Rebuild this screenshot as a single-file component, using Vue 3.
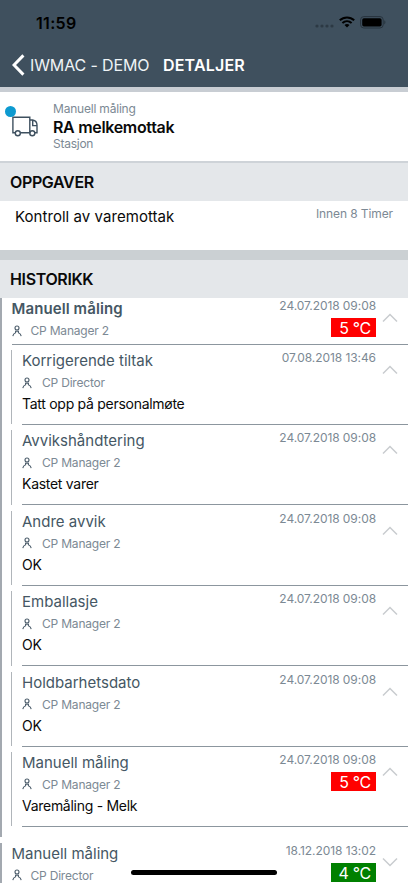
<script setup>
const children = [
  { title: 'Korrigerende tiltak', user: 'CP Director', date: '07.08.2018 13:46', note: 'Tatt opp på personalmøte' },
  { title: 'Avvikshåndtering', user: 'CP Manager 2', date: '24.07.2018 09:08', note: 'Kastet varer' },
  { title: 'Andre avvik', user: 'CP Manager 2', date: '24.07.2018 09:08', note: 'OK' },
  { title: 'Emballasje', user: 'CP Manager 2', date: '24.07.2018 09:08', note: 'OK' },
  { title: 'Holdbarhetsdato', user: 'CP Manager 2', date: '24.07.2018 09:08', note: 'OK' },
  { title: 'Manuell måling', user: 'CP Manager 2', date: '24.07.2018 09:08', note: 'Varemåling - Melk', value: '5 °C' },
]
const groups = [
  { title: 'Manuell måling', user: 'CP Manager 2', date: '24.07.2018 09:08', value: '5 °C', open: true, children },
  { title: 'Manuell måling', user: 'CP Director', date: '18.12.2018 13:02', value: '4 °C', ok: true, open: false, children: [] },
]
</script>

<template>
  <main class="screen">
    <header class="top">
      <div class="status">
        <span class="clock">11:59</span>
        <svg class="dots" width="20" height="4" viewBox="0 0 20 4"><circle v-for="n in 4" :key="n" :cx="n * 5 - 3" cy="2" r="1.6" /></svg>
        <svg class="wifi" width="16" height="12" viewBox="0 0 16 12" fill="none" stroke="#000" stroke-width="2">
          <path d="M.8 4.3C4.9.4 11.1.4 15.2 4.3M3.4 7.1c2.7-2.5 6.5-2.5 9.2 0" />
          <path d="M5.5 8.9c1.5-1.3 3.5-1.3 5 0L8 11.5z" fill="#000" stroke="none" />
        </svg>
        <svg class="battery" width="26" height="13" viewBox="0 0 26 13">
          <rect x=".6" y=".6" width="22.6" height="11.4" rx="3.2" fill="none" stroke="#27333d" />
          <rect x="2.2" y="2.2" width="19.4" height="8.2" rx="1.7" />
          <path d="M24.3 4.2c1.5.7 1.5 3.5 0 4.2z" fill="#27333d" />
        </svg>
      </div>
      <nav class="nav">
        <svg width="13" height="22" viewBox="0 0 13 22" fill="none" stroke="#fff" stroke-width="3"><path d="M11.4 1.4 2 11l9.4 9.6" /></svg>
        <span class="back">IWMAC - DEMO</span>
        <span class="current">DETALJER</span>
      </nav>
    </header>

    <section class="station">
      <div class="truck">
        <svg width="27" height="21" viewBox="0 0 27 21" fill="none" stroke="#3e505f" stroke-width="1.4">
          <path d="M3.3 16.800H.9V1.200h16.900v15.600H8.300M17.800 4h2.800c2.700.4 4.400 2.700 4.400 5.300v7.500h-2.300M20.700 4v5.600H25" />
          <circle cx="5.800" cy="17.200" r="2.500" /><circle cx="20.300" cy="17.200" r="2.500" />
        </svg>
        <i class="badge"></i>
      </div>
      <div class="station-text">
        <span class="kind">Manuell måling</span>
        <strong class="name">RA melkemottak</strong>
        <span class="type">Stasjon</span>
      </div>
    </section>

    <h2 class="heading">OPPGAVER</h2>
    <section class="task">
      <span class="task-name">Kontroll av varemottak</span>
      <span class="due">Innen 8 Timer</span>
    </section>

    <h2 class="heading">HISTORIKK</h2>
    <section v-for="(g, i) in groups" :key="i" class="group" :class="{ open: g.open }">
      <div class="group-head">
        <div class="left">
          <span class="title" :class="{ bold: g.open }">{{ g.title }}</span>
          <span class="user">
            <svg width="10" height="12" viewBox="0 0 10 12" fill="none" stroke="#4b5c6a" stroke-width="1.1"><circle cx="5" cy="3" r="2" /><path d="M.8 11.200C1.200 8.900 2 8.200 3.600 7.700V6.300h2.800v1.400C8 8.200 8.800 8.900 9.200 11.200" /></svg>
            <span>{{ g.user }}</span>
          </span>
        </div>
        <div class="right"><span class="date">{{ g.date }}</span><span class="value" :class="{ ok: g.ok }">{{ g.value }}</span></div>
        <svg class="chev" :class="{ down: !g.open }" width="16" height="10" viewBox="0 0 16 10" fill="none" stroke="#c9cccf" stroke-width="1.5"><path d="M1 8.5 8 1.5l7 7" /></svg>
      </div>
      <article v-for="c in g.children" :key="c.title" class="child">
        <div class="child-body">
          <div class="left">
            <span class="title">{{ c.title }}</span>
            <span class="user">
              <svg width="10" height="12" viewBox="0 0 10 12" fill="none" stroke="#4b5c6a" stroke-width="1.1"><circle cx="5" cy="3" r="2" /><path d="M.8 11.200C1.200 8.900 2 8.200 3.600 7.700V6.300h2.800v1.400C8 8.200 8.800 8.900 9.200 11.200" /></svg>
              <span>{{ c.user }}</span>
            </span>
            <span class="note">{{ c.note }}</span>
          </div>
          <div class="right"><span class="date">{{ c.date }}</span><span v-if="c.value" class="value">{{ c.value }}</span></div>
          <svg class="chev" width="16" height="10" viewBox="0 0 16 10" fill="none" stroke="#c9cccf" stroke-width="1.5"><path d="M1 8.5 8 1.5l7 7" /></svg>
        </div>
      </article>
    </section>
    <div class="home"></div>
  </main>
</template>

<style>
body { margin: 0; }
</style>

<style scoped>
.screen { position: relative; box-sizing: border-box; width: 408px; height: 883px; overflow: hidden; background: #fff; font-family: Inter, "Liberation Sans", sans-serif; color: #0a0a0a; white-space: nowrap; }
.screen * { box-sizing: border-box; }
svg { display: block; flex: none; }
.top { height: 92px; background: #3f505e; border-bottom: 5px solid #c8cdd3; }
.status { display: flex; height: 45px; padding-left: 36px; }
.clock { width: 279px; padding-top: 13px; font-size: 16px; letter-spacing: .3px; line-height: 20px; font-weight: 600; color: #000; }
.dots { margin-top: 24px; fill: #2c3944; }
.wifi { margin: 16px 0 0 4px; }
.battery { margin: 16px 0 0 5px; }
.nav { display: flex; align-items: center; height: 40px; padding-left: 12px; color: #fff; }
.back { width: 133px; margin-left: 5px; font-size: 16px; letter-spacing: -.13px; color: #eef3f6; }
.current { font-size: 16px; letter-spacing: .17px; font-weight: 600; }
.station { display: flex; height: 71px; border-bottom: 2px solid #ced3d8; }
.truck { position: relative; width: 53px; padding: 24px 0 0 12px; }
.badge { position: absolute; left: 5px; top: 14px; width: 11px; height: 11px; border-radius: 50%; background: #0d9ad0; }
.station-text { display: flex; flex-direction: column; padding-top: 9px; }
.kind { font-size: 12px; letter-spacing: -.2px; line-height: 16px; color: #7c8994; }
.name { font-size: 16px; letter-spacing: -.32px; line-height: 20px; font-weight: 600; }
.type { font-size: 12px; letter-spacing: -.25px; line-height: 14px; color: #7c8994; }
.heading { margin: 0; height: 38px; padding-left: 10px; font-size: 16px; letter-spacing: -.36px; line-height: 39px; font-weight: 600; background: #e4e7ea; }
.task { display: flex; justify-content: space-between; height: 59px; padding: 5px 15px 0 15px; border-bottom: 10px solid #cbd0d3; }
.task-name { font-size: 15px; letter-spacing: .05px; line-height: 21px; }
.due { font-size: 12px; letter-spacing: -.1px; line-height: 16px; color: #7c8994; }
.group { border-left: 2px solid #a3a9b0; margin-bottom: 6px; }
.group.open { padding-bottom: 10.6px; }
.group-head { display: flex; height: 47px; margin-left: 9.5px; border-bottom: 1.5px solid #8c969e; }
.left { display: flex; flex-direction: column; flex: 1; padding-top: 1px; }
.title { font-size: 15px; line-height: 20px; color: #455764; }
.title.bold { font-weight: 600; letter-spacing: .1px; }
.user { display: flex; align-items: center; height: 23px; font-size: 12px; letter-spacing: -.2px; color: #7c8994; }
.user span { margin-left: 9px; }
.note { font-size: 14px; letter-spacing: -.28px; line-height: 20px; }
.right { display: flex; flex-direction: column; align-items: flex-end; }
.date { font-size: 12px; letter-spacing: -.07px; line-height: 16px; color: #7c8994; }
.value { width: 45px; height: 19px; margin-top: 4px; padding-right: 5px; text-align: right; font-size: 16px; letter-spacing: -.3px; line-height: 20px; color: #fff; background: #f00; }
.value.ok { background: #008000; }
.chev { margin: 15px 10px 0 6px; }
.chev.down { margin-top: 14px; transform: rotate(180deg); }
.child { height: 74.4px; margin: 5px 0 6px 9px; border-left: 1.5px solid #b0b5ba; }
.child + .child { margin-top: 0; }
.child:last-child { margin-bottom: 0; }
.child-body { display: flex; height: 75px; margin-left: 10px; border-bottom: 1.5px solid #8c969e; }
.child .user span { margin-left: 10px; }
.home { position: absolute; left: 131px; top: 870px; width: 146px; height: 5px; border-radius: 3px; background: #000; }
</style>
